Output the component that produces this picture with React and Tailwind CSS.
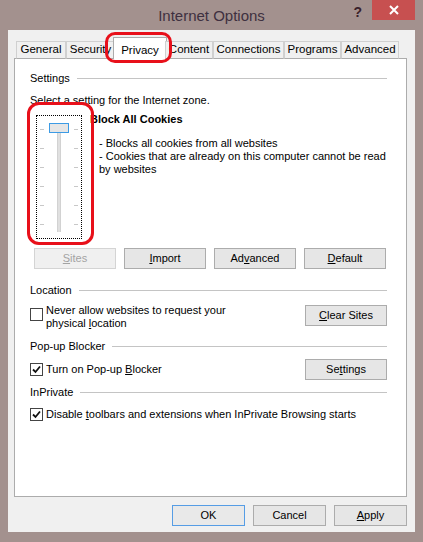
import React from "react";

const tabs = [
  { label: "General", w: "w-[50px]" },
  { label: "Security", w: "w-[49px]" },
  { label: "Privacy", w: "w-[54px]", active: true },
  { label: "Content", w: "w-[48px]" },
  { label: "Connections", w: "w-[71px]" },
  { label: "Programs", w: "w-[57px]" },
  { label: "Advanced", w: "w-[58px]" },
];

const Button = ({ children, w = "w-[82px]", disabled, focused }) => (
  <div
    className={`${w} h-[21px] flex items-center justify-center border ${
      focused
        ? "border-[#569de5] bg-[#e9e9e9]"
        : disabled
        ? "border-[#d4d4d4] bg-[#f0f0f0] text-[#a3a3a3]"
        : "border-[#acacac] bg-[#e6e6e6]"
    }`}
  >
    {children}
  </div>
);

const Check = ({ checked }) => (
  <div className="w-[13px] h-[13px] shrink-0 border border-[#444] bg-white flex items-center justify-center">
    {checked && (
      <svg width="9" height="9" viewBox="0 0 9 9">
        <path d="M1 4.5 L3.5 7 L8 1.5" fill="none" stroke="#111" strokeWidth="1.8" />
      </svg>
    )}
  </div>
);

const GroupLabel = ({ children, className = "" }) => (
  <div className={`flex items-center gap-[7px] leading-[13px] ${className}`}>
    <span>{children}</span>
    <div className="flex-1 h-px bg-[#c4c4c4]" />
  </div>
);

const Slider = () => {
  const ticks = [0, 1, 2, 3, 4, 5];
  return (
    <div className="ml-[6px] w-[46px] h-[124px] border border-dotted border-black flex justify-center gap-[5px] pt-[12px]">
      <div className="flex flex-col gap-[15px] pt-[1px]">
        {ticks.map((t) => (
          <div key={t} className="w-[4px] h-px bg-[#c8c8c8] mb-[3px]" />
        ))}
      </div>
      <div className="w-[20px] flex flex-col items-center">
        <div className="w-[20px] h-[10px] border border-[#3c9be5] bg-[#e6e6e6] -mt-[5px]" />
        <div className="w-[4px] h-[99px] bg-[#e0e0e0] border-x border-[#d2d2d2]" />
      </div>
      <div className="flex flex-col gap-[15px] pt-[1px]">
        {ticks.map((t) => (
          <div key={t} className="w-[4px] h-px bg-[#c8c8c8] mb-[3px]" />
        ))}
      </div>
    </div>
  );
};

export default function App() {
  return (
    <div className="relative w-[423px] h-[542px] bg-[#a3918e] flex flex-col px-[8px] pb-[10px] font-['Liberation_Sans',Arial,sans-serif] text-[11px] text-black">
      {/* title bar */}
      <div className="h-[30px] grid grid-cols-[1fr_auto_1fr]">
        <div />
        <div className="pt-[7px] text-[15px] leading-[18px] text-[#3e3040]">Internet Options</div>
        <div className="flex justify-end items-start">
          <div className="pt-[3px] mr-[10px] text-[14px] leading-[18px] font-bold text-[#3a1f2b]">?</div>
          <div className="w-[43px] h-[20px] bg-[#c75050] flex items-center justify-center">
            <svg width="10" height="10" viewBox="0 0 10 10">
              <path d="M1 1 L9 9 M9 1 L1 9" stroke="white" strokeWidth="2" />
            </svg>
          </div>
        </div>
      </div>

      {/* dialog body */}
      <div className="flex-1 bg-[#f0f0f0] flex flex-col pl-[6px] pr-[8px] pt-[7px]">
        <div className="flex items-end h-[22px] pl-[2px] relative z-10 -mb-px">
          {tabs.map((t) =>
            t.active ? (
              <div
                key={t.label}
                className={`${t.w} -mx-[2px] h-[22px] bg-white border border-b-0 border-[#acacac] flex items-start justify-center pt-[4px] text-[11.5px]`}
              >
                {t.label}
              </div>
            ) : (
              <div
                key={t.label}
                className={`${t.w} h-[18px] bg-[#f0f0f0] border border-[#d0d0d0] border-b-[#acacac] flex items-center justify-center text-[11.5px]`}
              >
                {t.label}
              </div>
            )
          )}
        </div>

        <div className="h-[439px] bg-white border border-[#acacac] pl-[15px] pr-[19px] pt-[13px] flex flex-col">
          <GroupLabel>Settings</GroupLabel>
          <div className="mt-[9px] leading-[13px]">Select a setting for the Internet zone.</div>

          <div className="mt-[8px] flex">
            <Slider />
            <div className="ml-[8px] -mt-[2px] leading-[13px]">
              <div className="font-bold">Block All Cookies</div>
              <div className="mt-[11px] ml-[9px]">
                <div>- Blocks all cookies from all websites</div>
                <div>- Cookies that are already on this computer cannot be read</div>
                <div>by websites</div>
              </div>
            </div>
          </div>

          <div className="mt-[9px] ml-[4px] flex gap-[8px]">
            <Button disabled>
              <u>S</u>ites
            </Button>
            <Button>
              <u>I</u>mport
            </Button>
            <Button>
              Ad<u>v</u>anced
            </Button>
            <Button>
              <u>D</u>efault
            </Button>
          </div>

          <GroupLabel className="mt-[15px]">Location</GroupLabel>
          <div className="mt-[7px] flex items-start">
            <div className="mt-[4px]">
              <Check />
            </div>
            <div className="ml-[3px] leading-[13px]">
              <div>Never allow websites to request your</div>
              <div>
                physical <u>l</u>ocation
              </div>
            </div>
            <div className="ml-auto mt-[1px]">
              <Button>
                <u>C</u>lear Sites
              </Button>
            </div>
          </div>

          <GroupLabel className="mt-[10px]">Pop-up Blocker</GroupLabel>
          <div className="mt-[6px] flex items-center h-[21px]">
            <Check checked />
            <div className="ml-[3px]">
              Turn on Pop-up <u>B</u>locker
            </div>
            <div className="ml-auto">
              <Button>
                Se<u>t</u>tings
              </Button>
            </div>
          </div>

          <GroupLabel className="mt-[6px]">InPrivate</GroupLabel>
          <div className="mt-[9px] flex items-center">
            <Check checked />
            <div className="ml-[3px] leading-[13px]">
              Disable <u>t</u>oolbars and extensions when InPrivate Browsing starts
            </div>
          </div>
        </div>

        <div className="mt-[8px] flex justify-end gap-[8px]">
          <Button w="w-[73px]" focused>
            OK
          </Button>
          <Button w="w-[73px]">Cancel</Button>
          <Button w="w-[73px]">
            <u>A</u>pply
          </Button>
        </div>
      </div>

      {/* red annotations */}
      <div className="absolute left-[105px] top-[32px] w-[67px] h-[31px] border-[3px] border-[#e8101a] rounded-[10px] z-20" />
      <div className="absolute left-[27px] top-[102px] w-[67px] h-[143px] border-[3px] border-[#e8101a] rounded-[12px] z-20" />
    </div>
  );
}
